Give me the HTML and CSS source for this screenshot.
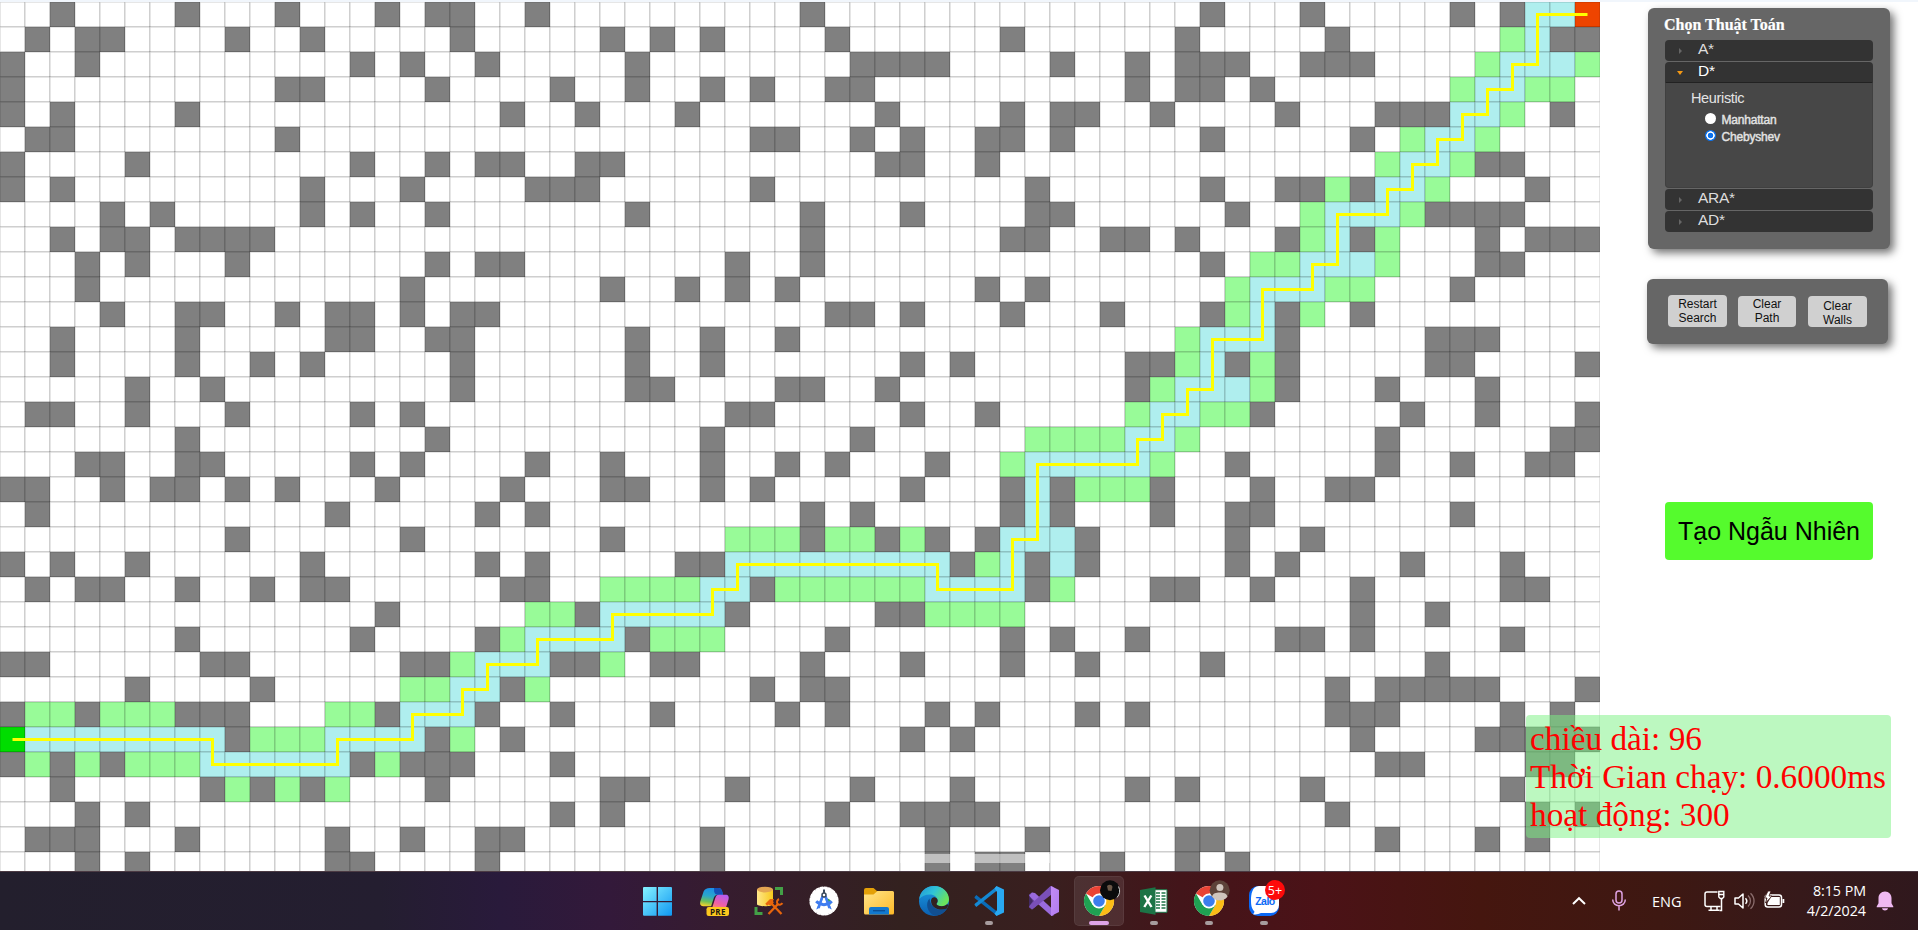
FILE: index.html
```html
<!DOCTYPE html>
<html lang="vi">
<head>
<meta charset="utf-8">
<title>PathFinding</title>
<link rel="stylesheet" href="styles.css">
</head>
<body>
<div class="top-strip"></div>
<main class="stage">
  <svg class="board" id="board" width="1600" height="869"></svg>
  <div class="board-bar"></div>

  <aside class="side">
    <section class="panel algo">
      <h1 class="algo-title">Chọn Thuật Toán</h1>
      <div class="accordion">
        <div class="acc-head"><i class="tri"></i><span>A*</span></div>
        <div class="acc-head open"><i class="tri"></i><span>D*</span></div>
        <div class="acc-body">
          <div class="opt-title">Heuristic</div>
          <label class="opt"><i class="radio"></i>Manhattan</label>
          <label class="opt"><i class="radio checked"></i>Chebyshev</label>
        </div>
        <div class="acc-head"><i class="tri"></i><span>ARA*</span></div>
        <div class="acc-head"><i class="tri"></i><span>AD*</span></div>
      </div>
    </section>

    <section class="panel controls">
      <button class="ctl tall">Restart<br>Search</button>
      <button class="ctl">Clear<br>Path</button>
      <button class="ctl low">Clear<br>Walls</button>
    </section>

    <button class="random">Tạo Ngẫu Nhiên</button>
  </aside>

  <div class="stats">
    <div>chiều dài: 96</div>
    <div>Thời Gian chạy: 0.6000ms</div>
    <div>hoạt động: 300</div>
  </div>
</main>

<footer class="taskbar">
  <svg width="0" height="0" class="defs">
    <defs>
      <linearGradient id="win" x1="0" y1="0" x2="1" y2="1"><stop offset="0" stop-color="#86f2ff"/><stop offset="1" stop-color="#0f97f2"/></linearGradient>
      <linearGradient id="copA" x1="0.5" y1="0" x2="0.3" y2="1"><stop offset="0" stop-color="#1b8fe8"/><stop offset=".45" stop-color="#2ba7c9"/><stop offset=".75" stop-color="#6cc05a"/><stop offset="1" stop-color="#f3d12c"/></linearGradient>
      <linearGradient id="copB" x1="0.7" y1="0" x2="0.3" y2="1"><stop offset="0" stop-color="#b65cf0"/><stop offset=".55" stop-color="#ef5fa5"/><stop offset="1" stop-color="#ff9a55"/></linearGradient>
      <linearGradient id="fold" x1="0" y1="0" x2="1" y2="1"><stop offset="0" stop-color="#ffe58a"/><stop offset="1" stop-color="#fdb928"/></linearGradient>
      <linearGradient id="edgeT" x1="0" y1="0" x2="1" y2="0.5"><stop offset="0" stop-color="#2393d6"/><stop offset=".5" stop-color="#2fc3d8"/><stop offset="1" stop-color="#6be35c"/></linearGradient>
      <linearGradient id="edgeB" x1="0" y1="0" x2="0" y2="1"><stop offset="0" stop-color="#1c9ce3"/><stop offset="1" stop-color="#0b5fb0"/></linearGradient>
      <linearGradient id="cyl" x1="0" y1="0" x2="1" y2="0"><stop offset="0" stop-color="#ffe78a"/><stop offset="1" stop-color="#f8c81c"/></linearGradient>
      <linearGradient id="vs" x1="0" y1="0" x2="1" y2="1"><stop offset="0" stop-color="#c38cf5"/><stop offset="1" stop-color="#b07cf0"/></linearGradient>
      <g id="chrome">
        <circle cx="25" cy="25" r="15" fill="#fff"/>
        <path d="M25 25 12 17.5A15 15 0 0 1 38 17.5H25Z" fill="#ea4335"/>
        <path d="M25 17.5H38A15 15 0 0 1 25 40L31.5 28.7Z" fill="#fbbc16"/>
        <path d="M12 17.5 18.5 28.7 31.5 28.7 25 40A15 15 0 0 1 12 17.5Z" fill="#1fa152"/>
        <circle cx="25" cy="25" r="7.4" fill="#fff"/>
        <circle cx="25" cy="25" r="5.8" fill="#3b7ded"/>
      </g>
    </defs>
  </svg>

  <nav class="apps">
    <div class="app"><svg viewBox="0 0 50 50"><path fill="url(#win)" d="M10 11h12.6v14H9V12a1 1 0 0 1 1-1ZM24 11h13a1 1 0 0 1 1 1v13H24ZM9 26.2h13.6v13.6H10a1 1 0 0 1-1-1ZM24 26.2h14v12.6a1 1 0 0 1-1 1H24Z"/></svg></div>

    <div class="app"><svg viewBox="0 0 50 50">
      <path d="M21 12h8.5c2.3 0 3 1.4 3.6 3.2l1 3.6h-5c-3 0-4 2-4.8 4.6l-2.2 6.8H14c-2.6 0-3.4-2-2.7-4.6l3.3-10C15.6 13.2 17.5 12 21 12Z" fill="url(#copA)"/>
      <path d="M25 12h4.5c2.3 0 3 1.4 3.6 3.2l1 3.6h-5.4c-2 0-3-1.3-3.5-3.1Z" fill="#1450b8"/>
      <path d="M30 18.8h6.5c2.9 0 3.7 2.1 3 4.7l-2.6 8.2c-.8 2.6-2.3 3.8-5 3.8H22l4.2-13.2c.8-2.4 1.6-3.5 3.8-3.5Z" fill="url(#copB)"/>
      <rect x="17.500" y="31" width="22.500" height="9" rx="2.200" fill="#fcc81e"/>
      <text class="pre" x="28.900" y="38.500" text-anchor="middle">PRE</text></svg></div>

    <div class="app"><svg viewBox="0 0 50 50">
      <path d="M31 12.500h6.500v6.500M12 31v6.500h6.500" fill="none" stroke="#43a047" stroke-width="3"/>
      <path d="M13 13.500v14.500c0 3 16 3 16 0V13.500Z" fill="url(#cyl)"/>
      <ellipse cx="21" cy="13.600" rx="8" ry="2.800" fill="#e3a552"/>
      <path d="M27.500 27.500 37.500 38M24.500 38 34 28" fill="none" stroke="#e8650c" stroke-width="2.300"/>
      <path d="M21.300 27.700 26 22.900h4l-1 2 .8 1.500-3.400 3.400-1.700-1.300-1.600 1.300Z" fill="#e8650c"/>
      <path d="M35 23c-2 1-2.500 3-1.500 4.800 1.500 1.500 3.500 1.200 5-.7" fill="none" stroke="#e8650c" stroke-width="2"/></svg></div>

    <div class="app"><svg viewBox="0 0 50 50">
      <circle cx="25" cy="25" r="13.600" fill="#fff"/><circle cx="25" cy="25" r="13.700" fill="none" stroke="#fff" stroke-width="1.800" stroke-dasharray="2.600 1.700" stroke-linecap="round"/>
      <path d="M28 22.500a4.500 4.500 0 0 1 4 6l-4-1Z" fill="#34a853"/>
      <path d="M23.500 18h3l6.300 15.500-2.300-1L25 20.500l-5.500 12-2.300 1Z" fill="#3f7df0"/>
      <path d="M17.200 25.300c4.500 4.500 11.100 4.500 15.600 0" fill="none" stroke="#3f7df0" stroke-width="3"/>
      <path d="M23.400 20.500 19.600 32M26.600 20.500 30.400 32" stroke="#3f7df0" stroke-width="2.400"/>
      <circle cx="25" cy="19" r="2" fill="#fff" stroke="#3a4a5c" stroke-width="1.500"/><path d="M25 13.500v3.500" stroke="#3a4a5c" stroke-width="2"/></svg></div>

    <div class="app"><svg viewBox="0 0 50 50">
      <path d="M10 14a2 2 0 0 1 2-2h7.500l3.500 3H38v6H10Z" fill="#e3a008"/>
      <path d="M10 18.500h9.500l4-3.500H38.500A1.500 1.500 0 0 1 40 16.500V37a1.500 1.500 0 0 1-1.500 1.500h-27A1.500 1.500 0 0 1 10 37Z" fill="url(#fold)"/>
      <path d="M15 38.500V33a2 2 0 0 1 2-2h16a2 2 0 0 1 2 2v5.500Z" fill="#1279cf"/><path d="M19 34.700h12" stroke="#0b4f96" stroke-width="1.400"/></svg></div>

    <div class="app"><svg viewBox="0 0 50 50">
      <circle cx="25" cy="25" r="15" fill="url(#edgeB)"/>
      <path d="M10.200 23C11.200 15 17.500 10 25 10c8.500 0 15 6.300 15 13.300 0 4.200-3.300 6.900-7.200 6.900-3 0-5.300-1-5.300-2.200 0-.7 1.200-1.300 1.200-3.300 0-3.500-3.600-6.200-8-6.200-4.500 0-8.300 2-10.500 4.500Z" fill="url(#edgeT)"/>
      <path d="M20.500 22.500c-4.500 4.500-2.600 14.500 5.500 17.300 5.600-.3 9.600-3.300 12-7.300-8.500 3.700-16.500-.5-17.500-10Z" fill="#114f91"/>
      <path d="M22 24.500c.4-2.300 2-3.500 3.700-3.200 1.800.4 3 1.800 3 3.400 0 1.900-1.200 2.500-1.200 3.300 0 1.200 2.300 2.200 5.300 2.200 2 0 4-.8 5.300-2l1.400.6-1.500 3.600c-7 3-16 0-16-7.900Z" fill="#33211f"/></svg></div>

    <div class="app"><svg viewBox="0 0 50 50">
      <path d="M12.300 19 33 35.500V39.700L10.800 22.200a1 1 0 0 1 0-1.400Z" fill="#0a6cb8"/>
      <path d="M12.300 31 33 14.500V10.300L10.800 27.800a1 1 0 0 0 0 1.400Z" fill="#1489d4"/>
      <path d="M32.500 10 40 13.500V36.500L32.500 40 30.500 37.800 33 34V16l-2.500-3.800Z" fill="#29a9f2"/></svg><b class="dot"></b></div>

    <div class="app"><svg viewBox="0 0 50 50">
      <path d="M10 18.500 13 16.500 17 19.500V30.500L13 33.500 10 31.500Z" fill="#68479c"/>
      <path d="M13 16.500 16 17 34.500 34V39.500L32.500 40 10 20Z" fill="#9a6bdc"/>
      <path d="M13 33.500 10 30 31.500 10 34.500 11V17Z" fill="#7a50b8"/>
      <path d="M10 19.500v11l4-5.500Z" fill="#432a63"/>
      <path d="M32 10 40 14V36l-8 4V10Z" fill="url(#vs)"/></svg></div>

    <div class="app active"><svg viewBox="0 0 50 50"><use href="#chrome"/>
      <circle cx="36" cy="14.300" r="10" fill="#0b0b0c"/><path d="M33 10c2-2 5-1.500 5.500 1l-1 4-3.500-.5Z" fill="#6b5747"/><path d="M44.500 10.500a10 10 0 0 1-1.500 11" stroke="#d0d0d0" fill="none" stroke-width="1"/></svg><b class="dot"></b></div>

    <div class="app"><svg viewBox="0 0 50 50">
      <path d="M25 13.700h13v22.600H25Z" fill="#fff" stroke="#1c7446" stroke-width="1"/>
      <path d="M27 17h4M27 20h4M27 23h4M27 26h4M27 29h4M27 32h4M32.500 17h4M32.500 20h4M32.500 23h4M32.500 26h4M32.500 29h4M32.500 32h4" stroke="#1c7446" stroke-width="1.700"/>
      <path d="M11 14 26.500 11.200V38.800L11 36Z" fill="#1c7446"/>
      <path d="M15.500 19.500 22.500 31M22.300 19.500 15.300 31" stroke="#fff" stroke-width="2.400"/></svg><b class="dot"></b></div>

    <div class="app"><svg viewBox="0 0 50 50"><use href="#chrome"/>
      <circle cx="35.700" cy="14.300" r="10" fill="#5d4239"/><circle cx="35.900" cy="11.500" r="3.500" fill="#cfc4bc"/><path d="M28 20.800c1-3.600 4-4.300 7.700-4.300s6.800.7 7.800 4.300a10 10 0 0 1-15.500 0Z" fill="#cfc4bc"/></svg><b class="dot"></b></div>

    <div class="app"><svg viewBox="0 0 50 50">
      <rect x="10" y="10" width="30" height="30" rx="9" fill="#0a68f5"/>
      <path d="M20 10h12a8 8 0 0 1 8 8v11a8 8 0 0 1-8 8H22c-2.500 1.300-5 1.700-8 1.200 1-1 1.500-1.700 1.300-3C12.500 32.500 12 29 12 24s1-14 8-14Z" fill="#fff"/>
      <text class="zalo" x="26" y="28.500" text-anchor="middle">Zalo</text>
      <circle cx="36" cy="14" r="10" fill="#fe0a0a"/>
      <text class="badge" x="36" y="18.500" text-anchor="middle">5+</text></svg><b class="dot"></b></div>
  </nav>

  <div class="tray">
    <svg class="t-chev" width="16" height="10" viewBox="0 0 16 10"><path d="M2 8 8 2.200 14 8" fill="none" stroke="#fff" stroke-width="2"/></svg>
    <svg class="t-mic" width="16" height="22" viewBox="0 0 16 22"><rect x="5" y="1" width="6" height="12" rx="3" fill="none" stroke="#dfa3e2" stroke-width="1.500"/><path d="M1.700 9.500c0 8.300 12.600 8.300 12.600 0M8 16v4.500" fill="none" stroke="#dfa3e2" stroke-width="1.500"/></svg>
    <span class="t-lang">ENG</span>
    <svg class="t-net" width="21" height="22" viewBox="0 0 21 22"><path d="M13.500 2H3a2 2 0 0 0-2 2v10.500a2 2 0 0 0 2 2H16.500M7 17v3M13 17v3M4.500 20.300H15.500" fill="none" stroke="#fff" stroke-width="1.500"/><path d="M14.800 1.500h5v5.500l-1.500 1.500h-2L14.800 7Z" fill="none" stroke="#fff" stroke-width="1.400"/><path d="M14.500 4.500h5.500M17.500 8.500v12h-2" fill="none" stroke="#fff" stroke-width="1.500"/></svg>
    <svg class="t-vol" width="21" height="20" viewBox="0 0 21 20"><path d="M1 7h3.500L9 3V17L4.500 13H1Z" fill="none" stroke="#fff" stroke-width="1.500" stroke-linejoin="round"/><path d="M11.500 7.200c1.600 1.700 1.600 3.900 0 5.600" fill="none" stroke="#fff" stroke-width="1.500"/><path d="M14 4.500c3.300 3 3.300 8 0 11M16.500 2.200c4.700 4.500 4.700 11.100 0 15.600" fill="none" stroke="#8a6c6c" stroke-width="1.300"/></svg>
    <svg class="t-bat" width="21" height="18" viewBox="0 0 21 18"><rect x="1.200" y="4" width="16.300" height="12" rx="2.500" fill="none" stroke="#fff" stroke-width="1.500"/><path d="M7 6h8.800v8H3.500v-2Z" fill="#fff"/><path d="M18.500 8h1.800v4h-1.800Z" fill="#fff"/><path d="M4 0 0.500 7H3L1.500 12 8 5H5L7 0Z" fill="#fff" stroke="#3c1815" stroke-width=".8"/></svg>
    <div class="t-clock"><div>8:15 PM</div><div>4/2/2024</div></div>
    <svg class="t-bell" width="18" height="20" viewBox="0 0 18 20"><path d="M9 .5c4 0 6.500 3 6.500 6.500v5.200l1.800 3.300v.8H.7v-.8l1.800-3.300V7C2.500 3.500 5 .5 9 .5ZM6 17.200h6c-.5 3-5.500 3-6 0Z" fill="#efb9f2"/></svg>
  </div>
</footer>
<script src="board.js"></script>
</body>
</html>
```
FILE: styles.css
```css
* { box-sizing: border-box; }
body {
  margin: 0;
  width: 1918px;
  height: 930px;
  overflow: hidden;
  display: flex;
  flex-direction: column;
  background: #fff;
  font-family: "Liberation Sans", Arial, sans-serif;
}
button { border: 0; padding: 0; margin: 0; font-family: inherit; color: #000; }

.top-strip { height: 2px; flex: none; background: #f1f6fc; }
.stage { height: 869px; flex: none; display: flex; position: relative; overflow: hidden; }
.board { flex: none; display: block; }
.cell { stroke: #000; stroke-opacity: .2; stroke-width: 1; fill: #fff; }
.cell.wall { fill: #808080; }
.cell.opened { fill: #98fb98; }
.cell.closed { fill: #afeeee; }
.cell.start { fill: #00dd00; }
.cell.end { fill: #ee4400; }
.route { fill: none; stroke: #ff0; stroke-width: 3; }
.board-bar { position: absolute; left: 900px; top: 852px; width: 150px; height: 9px; background: rgba(255,255,255,.5); }

/* side panels */
.side { width: 318px; padding: 6px 0 0 47px; }
.panel { background: #666; border-radius: 6px; box-shadow: 4px 4px 8px rgba(0,0,0,.55); }
.algo { width: 242px; height: 241px; margin-left: 1px; padding: 8px 17px 0; }
.algo-title {
  margin: 0 0 6px -1px;
  font: bold 16px/18px "Liberation Serif", "Times New Roman", serif;
  color: #fff;
  white-space: nowrap;
  -webkit-text-stroke: .2px #fff;
}
.accordion { display: flex; flex-direction: column; gap: 1px; }
.acc-head {
  height: 21px;
  display: flex;
  align-items: center;
  background: #333;
  border-radius: 4px;
  color: #ddd;
  font-size: 15.500px;
  line-height: 18px;
  letter-spacing: -.3px;
}
.acc-head span { margin-left: 15px; padding-bottom: 4px; }
.tri { width: 6px; height: 6px; margin-left: 12px; display: flex; align-items: center; justify-content: center; }
.tri::before { content: ""; border: 3px solid transparent; border-left: 3px solid #666; border-right: 0; }
.open { color: #fff; border-radius: 4px 4px 0 0; }
.open .tri::before { border: 3px solid transparent; border-top: 4px solid #f39814; border-bottom: 0; }
.acc-body {
  height: 106px;
  margin-top: -2px;
  padding: 7px 0 0 25px;
  background: #474747;
  border: 1px solid #404040;
  border-top-color: #222;
  border-radius: 0 0 4px 4px;
  color: #e4e4e4;
}
.opt-title { font-size: 14.500px; line-height: 16px; margin-bottom: 5px; letter-spacing: -.35px; }
.opt {
  height: 17px;
  margin-left: 14px;
  display: flex;
  align-items: center;
  gap: 5.500px;
  font-size: 12px;
  letter-spacing: -.2px;
  -webkit-text-stroke: .4px #e4e4e4;
}
.radio { width: 11px; height: 11px; border-radius: 50%; background: #fff; margin-bottom: 2px; }
.radio.checked { background: radial-gradient(circle, #0b72ee 2.500px, #fff 3.100px, #fff 3.900px, #0b72ee 4.500px); }

.controls { width: 241px; height: 65px; margin-top: 30px; padding: 16px 21px 0; display: flex; }
.ctl {
  width: 58px;
  height: 31px;
  margin: 1px 12px 0 0;
  padding-bottom: 1px;
  border-radius: 4px;
  background: #d0d0d0;
  font-size: 12px;
  line-height: 14px;
  color: #111;
}
.ctl.tall { width: 59px; height: 32px; margin: 0 11px 0 0; padding-bottom: 1px; }
.ctl.low { width: 59px; margin-right: 0; padding: 2px 0 0; }

.random {
  display: block;
  width: 208px;
  height: 58px;
  margin: 158px 0 0 18px;
  border-radius: 4px;
  background: #55fb2d;
  font-size: 25px;
  white-space: nowrap;
}

.stats {
  position: absolute;
  left: 1526px;
  top: 713px;
  width: 365px;
  height: 123px;
  padding: 5px 4px;
  border-radius: 4px;
  background: rgba(121,241,129,.5);
  color: #f00;
  font: 33.300px/38px "Liberation Serif", "Times New Roman", serif;
  white-space: nowrap;
}

/* taskbar */
.taskbar {
  height: 59px;
  flex: none;
  display: flex;
  position: relative;
  border-top: 1px solid #4b3a43;
  background: linear-gradient(90deg, #231f2d 0, #241e30 380px, #291a3b 500px, #33193a 610px, #361c2f 720px, #33211f 900px, #391f1f 1050px, #43151a 1180px, #4b1217 1320px, #45160f 1480px, #3e1812 1660px, #36191a 1800px, #30181d 1918px);
}
.defs { position: absolute; }
.apps { padding: 4px 0 0 634px; display: flex; gap: 5px; }
.app { width: 50px; height: 50px; border-radius: 5px; display: flex; flex-direction: column; align-items: center; position: relative; }
.app svg { width: 50px; height: 50px; display: block; overflow: visible; }
.active { background: rgba(255,255,255,.09); box-shadow: inset 0 0 0 1px rgba(255,255,255,.06); }
.dot { position: absolute; bottom: 1px; left: 21px; width: 8px; height: 4px; border-radius: 2px; background: #a79c9e; }
.active .dot { left: 15px; width: 20px; background: #dfa3e6; }
.pre { font: bold 8px "Open Sans", sans-serif; fill: #1d1a10; letter-spacing: .3px; }
.zalo { font: bold 10.500px "Liberation Sans", sans-serif; fill: #0a68f5; letter-spacing: -.5px; }
.badge { font: 12.500px "Open Sans", sans-serif; fill: #fff; }

.tray { margin-left: 282px; height: 58px; display: flex; align-items: center; color: #fff; font-family: "Open Sans", sans-serif; }
.tray svg { flex: none; }
.t-mic { margin-left: 24px; }
.t-lang { margin-left: 25px; width: 30px; font-size: 14.500px; }
.t-net { margin-left: 22px; }
.t-vol { margin-left: 9px; }
.t-bat { margin-left: 9px; margin-top: -2px; }
.t-clock { width: 72px; margin-left: 9px; font-size: 14.300px; line-height: 20px; text-align: right; letter-spacing: -.05px; }
.t-bell { margin-left: 10px; }
```
FILE: board.js
```javascript
// Each row: "walls | opened | closed"; a-b is an inclusive range of columns.
const rows = [
  "2 7 11 15 17-18 21 32 48 52 58 60||61-62",
  "1 3-4 9 12 18 24 26 28 33 40 47 53 62-63|60|61",
  "0 3 14 16 19 25 34-37 42 45 47-49 52-54|59 63|60-62",
  "0 11-12 17 22 25 28 30 33-34 45 47-48 50|58 61-62|59-60",
  "0 2 7 20 23 27 35 40 42-43 46 51 55-57 62|60|58-59",
  "1-2 11 30-31 34 36 39-40 42 48 54|56 59|57-58",
  "0 5 14 17 19-20 23-24 35-36 39 59-60|55 58|56-57",
  "0 2 12 16 21-23 30 41 48 51-52 54 61|53 57|55-56",
  "4 6 12 14 17 25 32 36 41-42 49 57-60|52 56|53-55",
  "2 4-5 7-10 32 40-41 44-45 47 51 54 59 61-63|52 55|53",
  "3 5 9 17 19-20 29 32 48 59-60|50-51 55|52-54",
  "3 16 24 27 29 31 39 41 58|49 53-54|50-52",
  "4 7-8 11 13-14 16 18-19 33-34 36 40 44 48 51 54|49 52|50",
  "2 7 13-14 17-18 25 28 31 51 57-59|47|48-50",
  "2 7 10 12 18 25 28 36 38 45-46 49 51 57-58 63|47 50|48",
  "5 8 18 25-26 31-32 35 45 51 55 59|46 50|47-49",
  "1-2 5 9 14 16 29-30 36 39 50 56 59 63|45 48-49|46-47",
  "7 17 28 34 55 62-63|41-44 47|45-46",
  "3-4 7-8 14 16 21 24 28 31 33 37 49 55 58 61-62|40 46|41-45",
  "0-1 4 6-7 9 11 15 20 24-25 28 30 36 40 42 46 50 53-54|43-45|41",
  "1 13 19 21 32 34 40 42 46 49-50 58||41",
  "9 16 24 32 35 37 39 43 49 52|29-31 33-34 36|40-42",
  "0 2 5 12 19 21 27-28 38 41 43 49 51 56 60|39|29-37 40 42",
  "1 3-4 7 10 12-13 20-21 30 41 46-47 50 54 60-61|24-27 31-36 42|28-29 37-40",
  "15 23 29 35-36 54 57|21-22 37-40|24-28",
  "7 14 19 25 33 40 42 45 51-52 54 60|20 26-28|21-24",
  "0-1 8-9 16-17 22-23 26-27 32 36 40 43 48 57|18 24|19-21",
  "5 10 20 30 32-33 53 55-59 63|16-17 21|18-19",
  "0 3 7-9 15 19 22 26 31 33 37 39 43 45 53-55 60 62|1-2 4-6 13-14|16-18",
  "9 17 20 36 38 54 59-63|10-12 18|1-8 13-16",
  "0 2 4 14 16-18 22 55-56 61-62|1 3 5-7 15|8-13",
  "2 8 10 12 17 24-25 29 34 38 45 47 52 60|9 11 13|",
  "3 5 22 24 33 36-39 53 61 63||",
  "1-3 7 13 16 19-20 28 37 41 47-48 55 59 61||",
  "3 5 13-14 19 28 37 39-40 44 47 49||"
];

// Corner cells of the route, as column,row.
const route = "0,29 8,29 8,30 13,30 13,29 16,29 16,28 18,28 18,27 19,27 19,26 21,26 21,25 24,25 24,24 28,24 28,23 29,23 29,22 37,22 37,23 40,23 40,21 41,21 41,18 45,18 45,17 46,17 46,16 47,16 47,15 48,15 48,13 50,13 50,11 52,11 52,10 53,10 53,8 55,8 55,7 56,7 56,6 57,6 57,5 58,5 58,4 59,4 59,3 60,3 60,2 61,2 61,0 63,0";

const SIZE = 25, COLS = 64, NS = "http://www.w3.org/2000/svg";
const kinds = ["wall", "opened", "closed"];
const board = document.getElementById("board");

function add(tag, attrs) {
  const el = document.createElementNS(NS, tag);
  for (const k in attrs) el.setAttribute(k, attrs[k]);
  board.appendChild(el);
}

rows.forEach((row, y) => {
  const cls = Array(COLS).fill("");
  row.split("|").forEach((part, i) => {
    part.split(" ").filter(Boolean).forEach(r => {
      const [a, b = a] = r.split("-").map(Number);
      for (let x = a; x <= b; x++) cls[x] = kinds[i];
    });
  });
  if (y === 0) cls[63] = "end";
  if (y === 29) cls[0] = "start";
  cls.forEach((c, x) => add("rect", { class: "cell " + c, x: x * SIZE, y: y * SIZE, width: SIZE, height: SIZE }));
});

add("polyline", {
  class: "route",
  points: route.split(" ").map(p => p.split(",").map(n => (+n + .5) * SIZE).join(",")).join(" ")
});
```
